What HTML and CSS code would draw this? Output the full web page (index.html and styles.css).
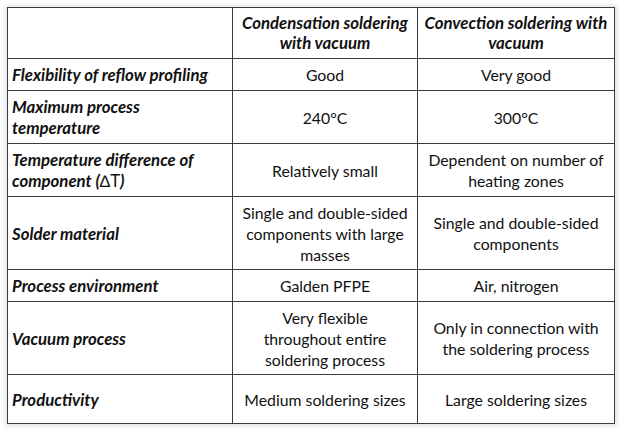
FILE: index.html
```html
<!DOCTYPE html>
<html>
<head>
<meta charset="utf-8">
<link rel="stylesheet" href="styles.css">
</head>
<body>
<div class="frame">
<table class="cmp">
<colgroup><col class="c1"><col class="c2"><col class="c3"></colgroup>
<tr class="r-head"><th></th><th>Condensation soldering<br>with vacuum</th><th>Convection soldering with<br>vacuum</th></tr>
<tr class="r-a"><td class="lab">Flexibility of reflow profiling</td><td>Good</td><td>Very good</td></tr>
<tr class="r-b"><td class="lab">Maximum process<br>temperature</td><td>240°C</td><td>300°C</td></tr>
<tr class="r-b"><td class="lab">Temperature difference of<br>component (<span class="up">∆T</span>)</td><td>Relatively small</td><td>Dependent on number of<br>heating zones</td></tr>
<tr class="r-c"><td class="lab">Solder material</td><td>Single and double-sided<br>components with large<br>masses</td><td>Single and double-sided<br>components</td></tr>
<tr class="r-a"><td class="lab">Process environment</td><td>Galden PFPE</td><td>Air, nitrogen</td></tr>
<tr class="r-c"><td class="lab">Vacuum process</td><td>Very flexible<br>throughout entire<br>soldering process</td><td>Only in connection with<br>the soldering process</td></tr>
<tr class="r-d"><td class="lab">Productivity</td><td>Medium soldering sizes</td><td>Large soldering sizes</td></tr>
</table>
</div>
</body>
</html>
```
FILE: styles.css
```css
html, body {
  margin: 0;
  padding: 0;
  background: #ffffff;
}
.frame {
  padding: 7px;
}
.cmp {
  border-collapse: collapse;
  table-layout: fixed;
  width: 607px;
  font-family: Lato, "Liberation Sans", sans-serif;
  font-size: 15.8px;
  line-height: 21px;
  color: #111;
  box-shadow: 0 0 5px 2px rgba(0,0,0,0.12);
}
.c1 { width: 225px; }
.c2 { width: 185px; }
.c3 { width: 197px; }
.cmp th, .cmp td {
  border: 1px solid #3c3c3c;
  padding: 0 3px;
  text-align: center;
  vertical-align: middle;
}
.cmp th {
  font-weight: bold;
  font-style: italic;
  font-size: 16.8px;
  line-height: 20px;
}
.cmp td.lab {
  text-align: left;
  font-weight: bold;
  font-style: italic;
  font-size: 16.8px;
  padding-left: 4px;
}
.up { font-style: normal; font-weight: normal; }
.r-head { height: 51px; }
.r-a { height: 32px; }
.r-b { height: 53px; }
.r-c { height: 73px; }
.r-d { height: 49px; }
```
